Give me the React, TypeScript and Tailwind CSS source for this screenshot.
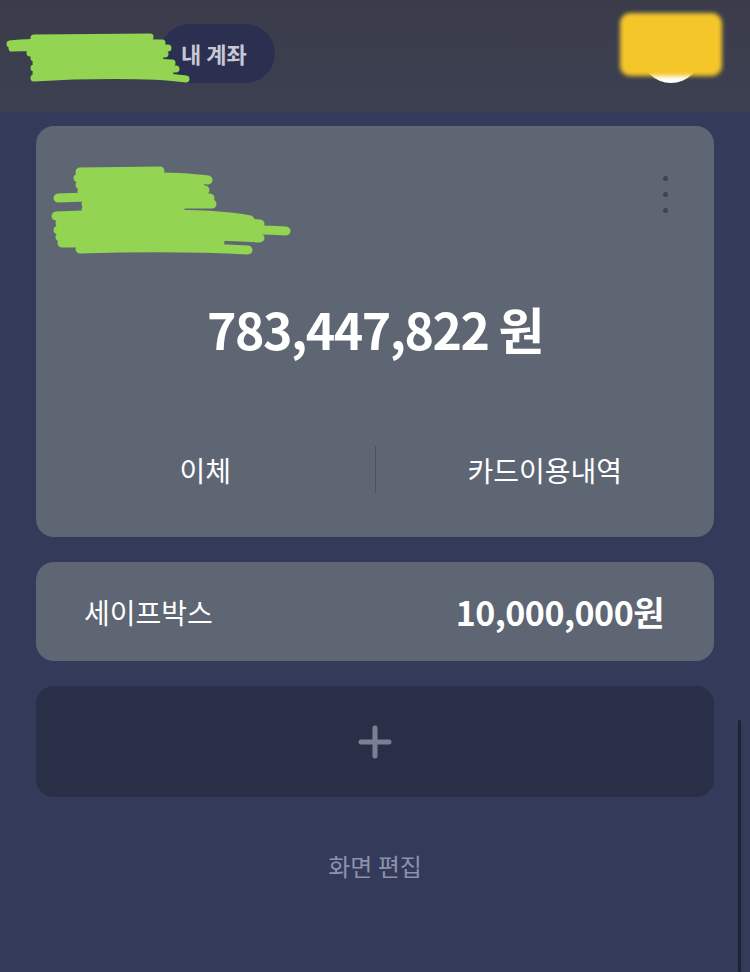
import React from 'react';

const font = { fontFamily: '"Noto Sans CJK KR", "Noto Sans", sans-serif' };

function HeaderScribble() {
  return (
    <svg width="200" height="60" viewBox="0 0 200 60" className="absolute left-0 top-[28px]" fill="none">
      <g stroke="#93d453" strokeLinecap="round" strokeWidth="7">
        <path d="M34 10 L150 9" />
        <path d="M10 16 C40 12 120 14 162 15" />
        <path d="M12 20 C60 18 120 20 168 20" />
        <path d="M30 25 L150 24 L165 26" />
        <path d="M34 30 C80 29 130 30 160 31" />
        <path d="M36 35 L150 34 L172 35" />
        <path d="M34 40 C90 39 140 40 176 41" />
        <path d="M36 45 L120 44 L170 45" />
        <path d="M34 50 C80 47 150 46 186 51" />
      </g>
    </svg>
  );
}

function CardScribble() {
  return (
    <svg width="260" height="100" viewBox="0 0 260 100" className="absolute left-[14px] top-[36px]" fill="none">
      <g stroke="#93d453" strokeLinecap="round" strokeWidth="9">
        <path d="M30 10 L110 9" />
        <path d="M28 16 C80 14 130 14 158 18" />
        <path d="M30 23 C80 22 130 22 150 24" />
        <path d="M32 29 L155 28" />
        <path d="M8 36 C60 34 120 34 160 36" />
        <path d="M36 42 L162 42" />
        <path d="M36 48 L130 47" />
        <path d="M6 54 C80 51 160 50 200 58" />
        <path d="M10 61 C80 59 160 58 210 62" />
        <path d="M8 68 C80 66 180 66 236 69" />
        <path d="M10 75 C80 73 160 73 210 76" />
        <path d="M12 81 L170 80" />
        <path d="M30 87 C100 85 160 86 198 88" />
      </g>
    </svg>
  );
}

export default function App() {
  return (
    <div className="relative w-full h-[972px] overflow-hidden bg-[#333a5a]" style={font}>
      {/* header */}
      <div className="relative h-[112px] bg-gradient-to-b from-[#3a3c4a] to-[#3d4051] flex items-center justify-between pl-[160px] pr-[49px] pb-[6px]">
        <div className="h-[59px] rounded-full bg-[#2b3050] flex items-center pl-[21px] pr-[28px]">
          <span className="text-[22px] font-semibold text-[#c6c8d4]">내 계좌</span>
        </div>
        <div className="w-[60px] h-[60px] rounded-full bg-white" />
        <HeaderScribble />
        <div className="absolute left-[620px] top-[13px] w-[102px] h-[63px] rounded-[10px] bg-[#f4c62a] blur-[2px]" />
      </div>

      {/* content */}
      <div className="flex flex-col gap-[25px] px-[36px] pt-[14px]">
        <div className="relative h-[411px] rounded-[18px] bg-[#5e6673] flex flex-col">
          <CardScribble />
          <div className="h-[172px] flex justify-end pt-[50px] pr-[46px]">
            <div className="flex flex-col gap-[11px]">
              <span className="w-[5px] h-[5px] rounded-full bg-[#3e4451]" />
              <span className="w-[5px] h-[5px] rounded-full bg-[#3e4451]" />
              <span className="w-[5px] h-[5px] rounded-full bg-[#3e4451]" />
            </div>
          </div>
          <div className="h-[60px] leading-[60px] text-center text-white text-[50px] font-semibold tracking-[-1.5px]">
            783,447,822 원
          </div>
          <div className="mt-[88px] h-[47px] flex items-center">
            <div className="flex-1 text-center text-white text-[28px]">이체</div>
            <div className="w-px h-full bg-[#4b515d]" />
            <div className="flex-1 text-center text-white text-[28px]">카드이용내역</div>
          </div>
        </div>

        <div className="h-[99px] rounded-[18px] bg-[#5e6673] flex items-center justify-between pl-[48px] pr-[50px]">
          <span className="text-white text-[28px]">세이프박스</span>
          <span className="text-white text-[34px] font-semibold tracking-[-0.5px]">10,000,000원</span>
        </div>

        <div className="h-[111px] rounded-[18px] bg-[#2a2f48] flex items-center justify-center">
          <svg width="36" height="36" viewBox="0 0 36 36" fill="none">
            <path d="M18 4 V32 M4 18 H32" stroke="#7a7f93" strokeWidth="5" strokeLinecap="round" />
          </svg>
        </div>
      </div>

      <div className="mt-[52px] h-[34px] leading-[34px] text-center text-[24px] text-[#8d92ab]">화면 편집</div>

      <div className="absolute right-[9px] top-[720px] w-[3px] h-[252px] rounded-full bg-[#1e2233]" />
    </div>
  );
}
